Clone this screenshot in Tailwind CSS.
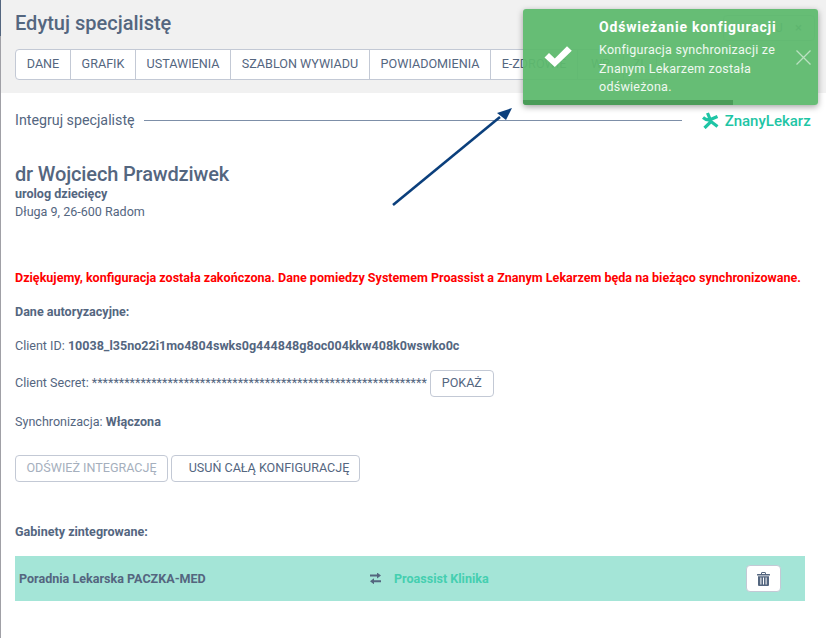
<!DOCTYPE html>
<html lang="pl">
<head>
    <meta charset="UTF-8">
    <title>Edytuj specjalistę</title>
    <script src="https://cdn.jsdelivr.net/npm/@tailwindcss/browser@4"></script>
</head>
<body class="relative w-[826px] h-[638px] overflow-hidden bg-white font-['Roboto',sans-serif] text-[12.55px] text-[#54667f]">
    <!-- left window edge -->
    <div class="absolute left-0 top-0 w-px h-[36px] bg-[#54667f]"></div>
    <div class="absolute left-0 top-[36px] w-px h-[602px] bg-[#a0a0a6]"></div>

    <!-- header -->
    <header class="h-[93px] bg-[#f1f1f1] pl-[15px] pr-[11px] pt-[9px]">
        <div class="flex items-start justify-between h-[40px]">
            <h1 class="text-[20px] leading-[28px] font-medium">Edytuj specjalistę</h1>
            <button class="mt-[6px] h-[26px] w-[92px] border border-[#c3c9d5] rounded text-[13px] flex items-center justify-end gap-3 pr-3"><span>IJ</span><span>×</span></button>
        </div>
        <nav class="inline-flex h-[31px] bg-white border border-[#c3c9d5] rounded text-[12.6px]">
            <a class="w-[55px] flex items-center justify-center border-r border-[#c3c9d5]">DANE</a>
            <a class="w-[65px] flex items-center justify-center border-r border-[#c3c9d5]">GRAFIK</a>
            <a class="w-[95px] flex items-center justify-center border-r border-[#c3c9d5]">USTAWIENIA</a>
            <a class="w-[139px] flex items-center justify-center border-r border-[#c3c9d5]">SZABLON WYWIADU</a>
            <a class="w-[121px] flex items-center justify-center border-r border-[#c3c9d5]">POWIADOMIENIA</a>
            <a class="w-[87px] flex items-center justify-center border-r border-[#c3c9d5]">E-ZDROWIE</a>
            <a class="w-[46px] flex items-center justify-center border-r border-[#c3c9d5]">WP</a>
            <a class="w-[32px] flex items-center justify-center">ZL</a>
        </nav>
    </header>

    <main class="pl-[15px] pr-[21px]">
        <!-- section title -->
        <div class="flex items-center h-[54px] -mr-[6px]">
            <span class="mt-[1px] text-[14.25px] whitespace-nowrap">Integruj specjalistę</span>
            <span class="h-px w-[538px] shrink-0 ml-[9px] bg-[#7d8fa8]"></span>
            <div class="ml-[20px] flex items-center gap-[6px] shrink-0 text-[#1ec5a5]">
                <svg width="17" height="17" viewBox="0 0 17 17" fill="none" stroke="#1ec5a5" stroke-width="3.2"><path d="M5.5 1 L8 7 M1 5.5 Q5 9 8.5 7.5 L15.5 4.5 M2.5 16 L9 9.5 L15.5 14.5"/></svg>
                <span class="text-[15px] font-medium leading-none mt-[2px] whitespace-nowrap">ZnanyLekarz</span>
            </div>
        </div>

        <section class="mt-[15px]">
            <h2 class="text-[20px] leading-[24px] font-medium tracking-[-0.15px]">dr Wojciech Prawdziwek</h2>
            <p class="font-bold leading-[16px]">urolog dziecięcy</p>
            <p class="leading-[20px]">Długa 9, 26-600 Radom</p>
        </section>

        <p class="mt-[46px] font-bold text-[#ff0000] leading-[20px] whitespace-nowrap">Dziękujemy, konfiguracja została zakończona. Dane pomiedzy Systemem Proassist a Znanym Lekarzem będa na bieżąco synchronizowane.</p>
        <p class="mt-[14px] font-bold leading-[20px]">Dane autoryzacyjne:</p>
        <p class="mt-[14px] leading-[20px]">Client ID: <b>10038_l35no22i1mo4804swks0g444848g8oc004kkw408k0wswko0c</b></p>
        <div class="mt-[14px] flex items-center h-[26px]">
            <span class="whitespace-nowrap">Client Secret: **************************************************************</span>
            <button class="ml-[3px] w-[64px] h-[27px] bg-white border border-[#c3c9d5] rounded">POKAŻ</button>
        </div>
        <p class="mt-[16px] leading-[20px]">Synchronizacja: <b>Włączona</b></p>
        <div class="mt-[23px] flex gap-[3px]">
            <button class="w-[153px] h-[27px] border border-[#c3c9d5] rounded text-[#a5afbd]">ODŚWIEŻ INTEGRACJĘ</button>
            <button class="w-[189px] h-[27px] pl-[7px] border border-[#c3c9d5] rounded">USUŃ CAŁĄ KONFIGURACJĘ</button>
        </div>
        <p class="mt-[40px] font-bold leading-[20px]">Gabinety zintegrowane:</p>
        <div class="mt-[14px] flex items-center h-[45px] pl-[4px] bg-[#a4e5d7] font-bold">
            <span class="w-[351px] mt-[2px]">Poradnia Lekarska PACZKA-MED</span>
            <svg class="w-[11px] h-[11px]" viewBox="0 0 11 11" fill="#54667f"><path d="M0 2h7V0l4 3-4 3V4H0z" transform="translate(0 -0.5)"/><path d="M11 9H4v2L0 8l4-3v2h7z" transform="translate(0 0.3)"/></svg>
            <span class="ml-[13px] w-[352px] mt-[2px] text-[#45cfb0]">Proassist Klinika</span>
            <button class="w-[35px] h-[27px] flex items-center justify-center bg-white border border-[#c3c9d5] rounded">
                <svg class="w-[13px] h-[14px]" viewBox="0 0 13 14" fill="#54667f"><path d="M4 1.6C4 .6 4.6 0 5.4 0h2.2C8.4 0 9 .6 9 1.6V2h3.5a.5.5 0 0 1 .5.5V3.5H0V2.5A.5.5 0 0 1 .5 2H4zM5 2h3V1.4C8 1.1 7.8 1 7.6 1H5.4C5.2 1 5 1.1 5 1.4z"/><path fill-rule="evenodd" d="M1 4.2h11V13a1 1 0 0 1-1 1H2a1 1 0 0 1-1-1zM3.4 5.5v7h1v-7zM6 5.5v7h1v-7zM8.6 5.5v7h1v-7z"/></svg>
            </button>
        </div>
    </main>

    <!-- annotation arrow -->
    <svg class="absolute left-[388px] top-[102px]" width="128" height="108" viewBox="0 0 128 108">
        <line x1="5" y1="103" x2="112" y2="15" stroke="#0b3f7c" stroke-width="2.6"/>
        <path d="M124 6 L109 11 L118 18Z" fill="#0b3f7c"/>
    </svg>

    <!-- toast -->
    <div class="absolute left-[523px] top-[9px] w-[295px] h-[96px] rounded-[3px] bg-[#5eb96e]/95 text-white shadow-[0_2px_6px_rgba(0,0,0,0.35)] overflow-hidden">
        <div class="absolute left-[21px] top-[36px]">
            <svg class="w-[28px] h-[22px]" viewBox="0 0 28 22"><path d="M0.5 12.5 L5 8 L10.8 13.6 L23 1.2 L27.8 5.8 L10.8 22Z" fill="#fff"/></svg>
        </div>
        <div class="pl-[76px] pt-[10px] pr-[30px]">
            <p class="text-[14px] font-bold leading-[16px] tracking-[0.8px]">Odświeżanie konfiguracji</p>
            <p class="mt-[6px] text-[12.5px] leading-[18.5px] tracking-[0.25px] text-white/90">Konfiguracja synchronizacji ze Znanym Lekarzem została odświeżona.</p>
        </div>
        <svg class="absolute right-[7px] top-[41px]" width="15" height="15" viewBox="0 0 15 15"><path d="M0.5 0.5 L14.5 14.5 M14.5 0.5 L0.5 14.5" stroke="#ffffff" stroke-opacity="0.55" stroke-width="1.3"/></svg>
        <div class="absolute left-0 bottom-0 w-[210px] h-[5px] bg-[#4a9c58]"></div>
    </div>
</body>
</html>
